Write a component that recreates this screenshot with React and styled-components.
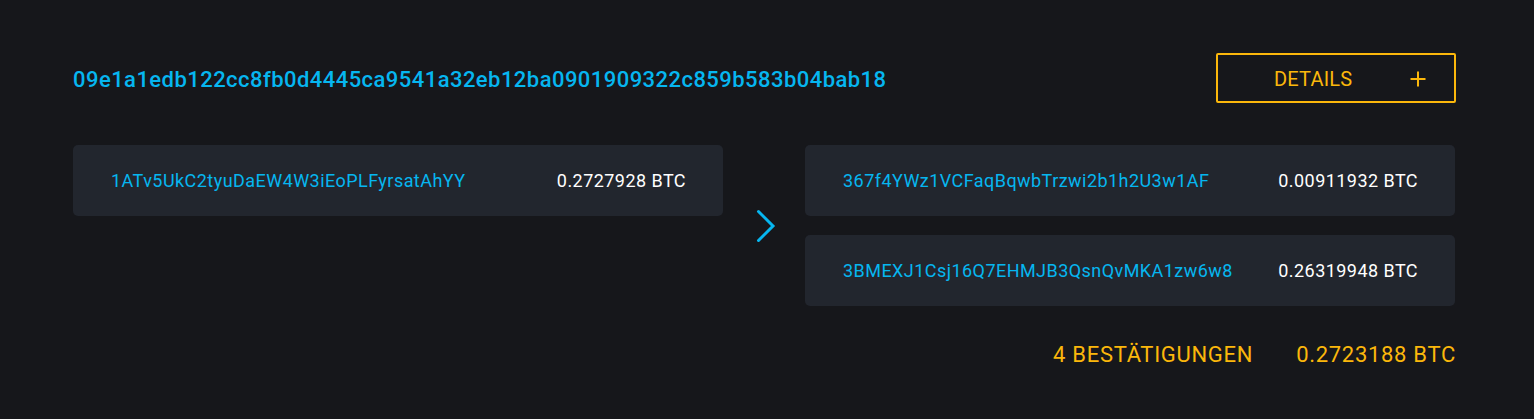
import React from "react";
import styled, { createGlobalStyle } from "styled-components";

const Global = createGlobalStyle`
  html, body { margin: 0; padding: 0; background: #16171b; }
  body { font-family: Roboto, "Liberation Sans", sans-serif; }
`;

const BLUE = "#06b6f0";
const GOLD = "#fbb70b";

const Page = styled.div`
  background: #16171b;
  min-height: 419px;
  box-sizing: border-box;
  padding: 53px 78px 0 73px;
`;

const Header = styled.div`
  display: flex;
  align-items: center;
  justify-content: space-between;
  height: 50px;
`;

const Hash = styled.div`
  color: ${BLUE};
  font-size: 22px;
  font-weight: 500;
  letter-spacing: 0.45px;
  padding-top: 2px;
`;

const DetailsButton = styled.button`
  box-sizing: border-box;
  width: 240px;
  height: 50px;
  display: flex;
  align-items: center;
  background: transparent;
  border: 2px solid ${GOLD};
  border-radius: 2px;
  color: ${GOLD};
  font-family: Roboto, "Liberation Sans", sans-serif;
  font-size: 20px;
  letter-spacing: 0.2px;
  padding: 2px 28px 0 56px;
  cursor: pointer;
`;

const PlusIcon = styled.svg`
  margin-left: auto;
  display: block;
`;

const Transfer = styled.div`
  display: grid;
  grid-template-columns: 650px 82px 650px;
  margin-top: 42px;
`;

const Column = styled.div`
  display: flex;
  flex-direction: column;
  gap: 19px;
`;

const Card = styled.div`
  height: 71px;
  background: #22262e;
  border-radius: 5px;
  display: flex;
  align-items: center;
  justify-content: space-between;
  padding: 0 37px 0 38px;
  font-size: 18px;
  letter-spacing: 0.45px;
`;

const Address = styled.span`
  color: ${BLUE};
`;

const Amount = styled.span`
  color: #ffffff;
`;

const Arrow = styled.div`
  display: flex;
  align-items: center;
  justify-content: center;
  align-self: center;
  padding-left: 4px;
`;

const Footer = styled.div`
  display: flex;
  justify-content: flex-end;
  gap: 43px;
  margin-top: 37px;
  line-height: 24px;
  color: ${GOLD};
  font-size: 22px;
  letter-spacing: 0.7px;
`;

const inputs = [{ addr: "1ATv5UkC2tyuDaEW4W3iEoPLFyrsatAhYY", amount: "0.2727928 BTC" }];
const outputs = [
  { addr: "367f4YWz1VCFaqBqwbTrzwi2b1h2U3w1AF", amount: "0.00911932 BTC" },
  { addr: "3BMEXJ1Csj16Q7EHMJB3QsnQvMKA1zw6w8", amount: "0.26319948 BTC" },
];

export default function App() {
  return (
    <>
      <Global />
      <Page>
        <Header>
          <Hash>09e1a1edb122cc8fb0d4445ca9541a32eb12ba0901909322c859b583b04bab18</Hash>
          <DetailsButton>
            DETAILS
            <PlusIcon width="16" height="16" viewBox="0 0 16 16">
              <path d="M8 0.5 V15.5 M0.5 8 H15.5" stroke={GOLD} strokeWidth="2" fill="none" />
            </PlusIcon>
          </DetailsButton>
        </Header>
        <Transfer>
          <Column>
            {inputs.map((r) => (
              <Card key={r.addr}>
                <Address>{r.addr}</Address>
                <Amount>{r.amount}</Amount>
              </Card>
            ))}
          </Column>
          <Arrow>
            <svg width="22" height="36" viewBox="0 0 22 36">
              <path d="M3.5 3.5 L18 18 L3.5 32.5" fill="none" stroke={BLUE} strokeWidth="3" strokeLinecap="round" strokeLinejoin="miter" />
            </svg>
          </Arrow>
          <Column>
            {outputs.map((r) => (
              <Card key={r.addr}>
                <Address>{r.addr}</Address>
                <Amount>{r.amount}</Amount>
              </Card>
            ))}
          </Column>
        </Transfer>
        <Footer>
          <span>4 BESTÄTIGUNGEN</span>
          <span>0.2723188 BTC</span>
        </Footer>
      </Page>
    </>
  );
}
